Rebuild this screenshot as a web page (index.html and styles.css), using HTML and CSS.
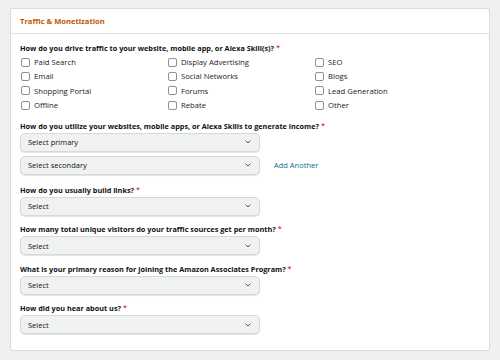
FILE: index.html
```html
<!DOCTYPE html>
<html>
<head>
<meta charset="utf-8">
<link rel="stylesheet" href="styles.css">
</head>
<body>
<div class="card">
  <div class="card-head">Traffic &amp; Monetization</div>
  <div class="card-body">
    <div class="group">
      <div class="label">How do you drive traffic to your website, mobile app, or Alexa Skill(s)? <span class="req">*</span></div>
      <div class="checks">
        <label class="check"><span class="box"></span>Paid Search</label>
        <label class="check"><span class="box"></span>Display Advertising</label>
        <label class="check"><span class="box"></span>SEO</label>
        <label class="check"><span class="box"></span>Email</label>
        <label class="check"><span class="box"></span>Social Networks</label>
        <label class="check"><span class="box"></span>Blogs</label>
        <label class="check"><span class="box"></span>Shopping Portal</label>
        <label class="check"><span class="box"></span>Forums</label>
        <label class="check"><span class="box"></span>Lead Generation</label>
        <label class="check"><span class="box"></span>Offline</label>
        <label class="check"><span class="box"></span>Rebate</label>
        <label class="check"><span class="box"></span>Other</label>
      </div>
    </div>
    <div class="group">
      <div class="label">How do you utilize your websites, mobile apps, or Alexa Skills to generate income? <span class="req">*</span></div>
      <div class="select"><span>Select primary</span><svg class="chev" viewBox="0 0 6 4" width="6" height="4"><path d="M0.6 0.6 L3 3 L5.4 0.6" fill="none" stroke="#555" stroke-width="1"/></svg></div>
      <div class="row">
        <div class="select second"><span>Select secondary</span><svg class="chev" viewBox="0 0 6 4" width="6" height="4"><path d="M0.6 0.6 L3 3 L5.4 0.6" fill="none" stroke="#555" stroke-width="1"/></svg></div>
        <a class="link">Add Another</a>
      </div>
    </div>
    <div class="group">
      <div class="label">How do you usually build links? <span class="req">*</span></div>
      <div class="select"><span>Select</span><svg class="chev" viewBox="0 0 6 4" width="6" height="4"><path d="M0.6 0.6 L3 3 L5.4 0.6" fill="none" stroke="#555" stroke-width="1"/></svg></div>
    </div>
    <div class="group">
      <div class="label">How many total unique visitors do your traffic sources get per month? <span class="req">*</span></div>
      <div class="select"><span>Select</span><svg class="chev" viewBox="0 0 6 4" width="6" height="4"><path d="M0.6 0.6 L3 3 L5.4 0.6" fill="none" stroke="#555" stroke-width="1"/></svg></div>
    </div>
    <div class="group">
      <div class="label">What is your primary reason for joining the Amazon Associates Program? <span class="req">*</span></div>
      <div class="select"><span>Select</span><svg class="chev" viewBox="0 0 6 4" width="6" height="4"><path d="M0.6 0.6 L3 3 L5.4 0.6" fill="none" stroke="#555" stroke-width="1"/></svg></div>
    </div>
    <div class="group">
      <div class="label">How did you hear about us? <span class="req">*</span></div>
      <div class="select"><span>Select</span><svg class="chev" viewBox="0 0 6 4" width="6" height="4"><path d="M0.6 0.6 L3 3 L5.4 0.6" fill="none" stroke="#555" stroke-width="1"/></svg></div>
    </div>
  </div>
</div>
</body>
</html>
```

FILE: styles.css
```css
html, body {
  margin: 0;
  padding: 0;
  background: #f0f0f0;
  font-family: "Open Sans", "Noto Sans", sans-serif;
  color: #111;
}
.card {
  margin: 8px 10px 10px 10px;
  width: 478px;
  background: #fff;
  border: 1px solid #dcdcdc;
  border-radius: 2px;
}
.card-head {
  height: 24px;
  line-height: 24px;
  padding-left: 9px;
  font-size: 7.6px;
  font-weight: 700;
  color: #c45500;
  border-bottom: 1px solid #e4e4e4;
}
.card-body {
  padding: 9px 9px 16px 9px;
  display: flex;
  flex-direction: column;
  gap: 8.5px;
}
.group {
  display: flex;
  flex-direction: column;
}
.label {
  font-size: 7.3px;
  font-weight: 700;
  line-height: 10px;
  height: 10px;
  white-space: nowrap;
}
.req {
  color: #c40000;
  font-weight: 400;
}
.checks {
  display: grid;
  grid-template-columns: 147px 147px 147px;
  grid-auto-rows: 14.3px;
  margin-top: 2px;
}
.check {
  display: flex;
  align-items: center;
  gap: 4px;
  font-size: 7.7px;
  color: #222;
  padding-left: 1px;
}
.box {
  width: 7px;
  height: 7px;
  border: 1px solid #8d9096;
  border-radius: 2px;
  background: #fff;
  flex: none;
}
.select {
  margin-top: 2px;
  width: 223px;
  height: 17px;
  background: #f0f2f2;
  border: 1px solid #d5d9d9;
  border-radius: 5px;
  box-shadow: 0 1px 1px rgba(15, 17, 17, 0.12);
  display: flex;
  align-items: center;
  justify-content: space-between;
  padding: 0 8px 0 7px;
  box-sizing: content-box;
  font-size: 7.5px;
  color: #111;
}
.select.second {
  margin-top: 4px;
}
.chev {
  flex: none;
}
.row {
  display: flex;
  align-items: center;
  margin-bottom: 1.5px;
}
.link {
  margin-left: 14px;
  margin-top: 4px;
  font-size: 7.5px;
  color: #007185;
}
```
